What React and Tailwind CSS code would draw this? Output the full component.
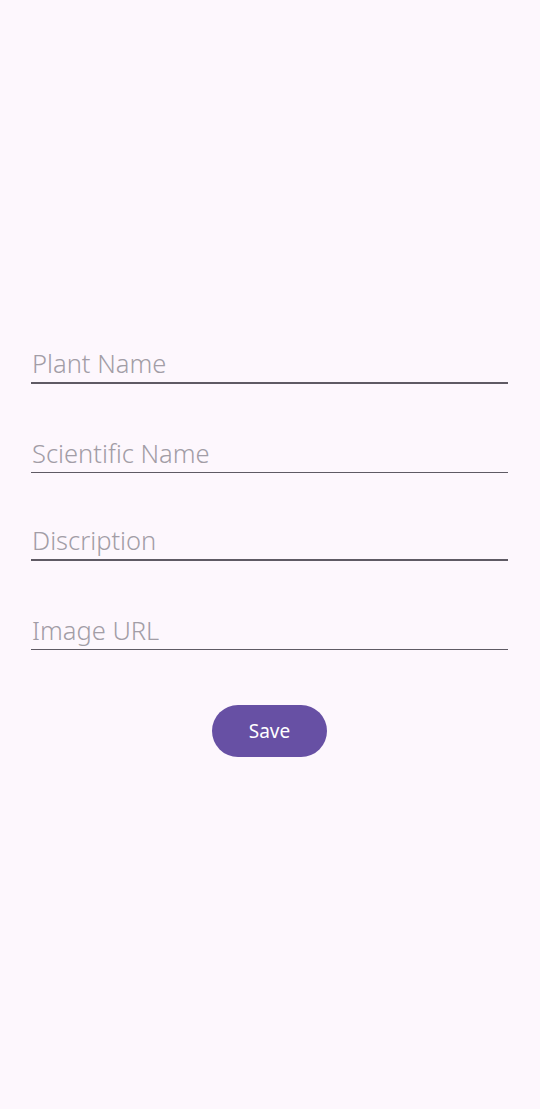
import React from 'react';

const fields = [
  { label: 'Plant Name', thick: true },
  { label: 'Scientific Name', thick: false },
  { label: 'Discription', thick: true },
  { label: 'Image URL', thick: false },
];

export default function App() {
  return (
    <div
      className="min-h-[1109px] w-full bg-[#fdf7fd] pl-[31px] pr-[32px] pt-[328px]"
      style={{ fontFamily: '"Noto Sans", Roboto, sans-serif' }}
    >
      <div className="flex flex-col gap-[32.6px]">
        {fields.map((f) => (
          <div
            key={f.label}
            className={
              'flex h-[56px] items-end pb-[4px] pl-[1px] ' +
              (f.thick ? 'border-b-2 border-[#5f5a64]' : 'border-b border-[#5f5a64]')
            }
          >
            <span className="text-[25.5px] font-light leading-[30px] text-[#a29da6]">{f.label}</span>
          </div>
        ))}
      </div>

      {/* Save button */}
      <div className="mt-[55px] flex justify-center">
        <button className="h-[52px] w-[115px] rounded-full bg-[#6750a4] text-[19px] text-white">
          Save
        </button>
      </div>
    </div>
  );
}
